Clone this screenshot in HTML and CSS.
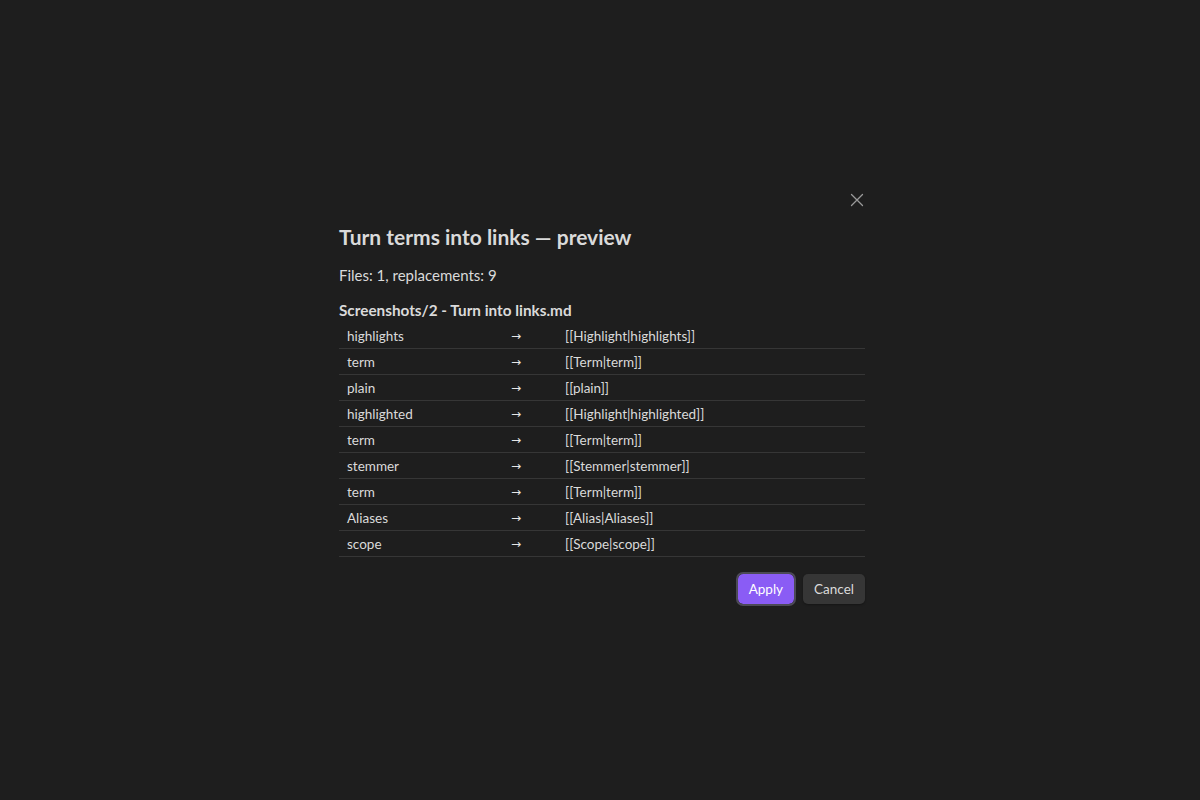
FILE: index.html
```html
<!DOCTYPE html>
<html>
<head>
<meta charset="utf-8">
<link rel="stylesheet" href="styles.css">
</head>
<body>
<div class="backdrop">
  <div class="modal">
    <button class="close" aria-label="Close">
      <svg width="14" height="14" viewBox="0 0 14 14"><path d="M1.5 1.5 L12.5 12.5 M12.5 1.5 L1.5 12.5" stroke="currentColor" stroke-width="1.3" stroke-linecap="round" fill="none"/></svg>
    </button>
    <h2 class="title">Turn terms into links — preview</h2>
    <p class="summary">Files: 1, replacements: 9</p>
    <h4 class="file">Screenshots/2 - Turn into links.md</h4>
    <table class="preview">
      <colgroup><col class="c1"><col class="c2"><col class="c3"></colgroup>
      <tbody>
        <tr><td>highlights</td><td class="arrow">→</td><td>[[Highlight|highlights]]</td></tr>
        <tr><td>term</td><td class="arrow">→</td><td>[[Term|term]]</td></tr>
        <tr><td>plain</td><td class="arrow">→</td><td>[[plain]]</td></tr>
        <tr><td>highlighted</td><td class="arrow">→</td><td>[[Highlight|highlighted]]</td></tr>
        <tr><td>term</td><td class="arrow">→</td><td>[[Term|term]]</td></tr>
        <tr><td>stemmer</td><td class="arrow">→</td><td>[[Stemmer|stemmer]]</td></tr>
        <tr><td>term</td><td class="arrow">→</td><td>[[Term|term]]</td></tr>
        <tr><td>Aliases</td><td class="arrow">→</td><td>[[Alias|Aliases]]</td></tr>
        <tr><td>scope</td><td class="arrow">→</td><td>[[Scope|scope]]</td></tr>
      </tbody>
    </table>
    <div class="actions">
      <button class="btn primary">Apply</button>
      <button class="btn">Cancel</button>
    </div>
  </div>
</div>
</body>
</html>
```

FILE: styles.css
```css
html, body {
  margin: 0;
  padding: 0;
  background: #1e1e1e;
  height: 100%;
}
body {
  font-family: "Lato", "Noto Sans", sans-serif;
  color: #dadada;
}
.backdrop {
  height: 800px;
  box-sizing: border-box;
  padding-top: 184px;
  display: flex;
  align-items: flex-start;
  justify-content: center;
}
.modal {
  position: relative;
  width: 526px;
  padding: 40px 14px 16px 18px;
  background: #1e1e1e;
}
.close {
  position: absolute;
  top: 2px;
  right: 8px;
  width: 28px;
  height: 28px;
  padding: 0;
  border: none;
  background: transparent;
  color: #9a9a9a;
  display: flex;
  align-items: center;
  justify-content: center;
}
.title {
  margin: 0 0 13px 0;
  font-size: 21px;
  line-height: 26px;
  font-weight: 700;
  color: #dadada;
}
.summary {
  margin: 0 0 12px 0;
  font-size: 15px;
  line-height: 24px;
}
.file {
  margin: 0 0 2px 0;
  font-size: 15.3px;
  line-height: 22px;
  font-weight: 700;
}
.preview {
  width: 100%;
  border-collapse: collapse;
  table-layout: fixed;
  font-size: 13.5px;
}
.c1 { width: 164px; }
.c2 { width: 54px; }
.preview td {
  height: 25px;
  padding: 0 8px;
  border-bottom: 1px solid #363636;
  white-space: nowrap;
}
.preview td.arrow {
  font-family: "DejaVu Sans", sans-serif;
  font-size: 12px;
  color: #e6e6e6;
}
.actions {
  display: flex;
  justify-content: flex-end;
  gap: 9px;
  margin-top: 17px;
}
.btn {
  font-family: inherit;
  font-size: 13.5px;
  height: 30px;
  padding: 0 11px;
  border-radius: 5px;
  border: none;
  background: #363636;
  color: #dadada;
  box-shadow: 0 1px 2px rgba(0,0,0,0.3);
}
.btn.primary {
  background: #8a5cf5;
  color: #fff;
  outline: 2px solid #4c4a56;
  outline-offset: 0;
}
```
